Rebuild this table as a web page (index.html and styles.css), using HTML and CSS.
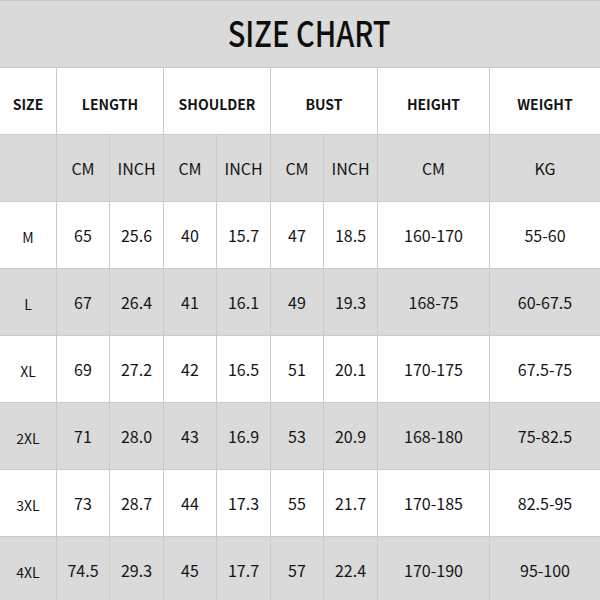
FILE: index.html
```html
<!DOCTYPE html>
<html>
<head>
<meta charset="utf-8">
<link rel="stylesheet" href="styles.css">
</head>
<body>
<div class="chart">
  <div class="title"><span class="title-text">SIZE CHART</span></div>
  <div class="grid">
    <div class="c hd">SIZE</div>
    <div class="c hd span2">LENGTH</div>
    <div class="c hd span2">SHOULDER</div>
    <div class="c hd span2">BUST</div>
    <div class="c hd">HEIGHT</div>
    <div class="c hd end">WEIGHT</div>

    <div class="c g"></div>
    <div class="c g">CM</div><div class="c g">INCH</div>
    <div class="c g">CM</div><div class="c g">INCH</div>
    <div class="c g">CM</div><div class="c g">INCH</div>
    <div class="c g">CM</div><div class="c g end">KG</div>

    <div class="c sz">M</div><div class="c">65</div><div class="c">25.6</div><div class="c">40</div><div class="c">15.7</div><div class="c">47</div><div class="c">18.5</div><div class="c">160-170</div><div class="c end">55-60</div>

    <div class="c g sz">L</div><div class="c g">67</div><div class="c g">26.4</div><div class="c g">41</div><div class="c g">16.1</div><div class="c g">49</div><div class="c g">19.3</div><div class="c g">168-75</div><div class="c g end">60-67.5</div>

    <div class="c sz">XL</div><div class="c">69</div><div class="c">27.2</div><div class="c">42</div><div class="c">16.5</div><div class="c">51</div><div class="c">20.1</div><div class="c">170-175</div><div class="c end">67.5-75</div>

    <div class="c g sz">2XL</div><div class="c g">71</div><div class="c g">28.0</div><div class="c g">43</div><div class="c g">16.9</div><div class="c g">53</div><div class="c g">20.9</div><div class="c g">168-180</div><div class="c g end">75-82.5</div>

    <div class="c sz">3XL</div><div class="c">73</div><div class="c">28.7</div><div class="c">44</div><div class="c">17.3</div><div class="c">55</div><div class="c">21.7</div><div class="c">170-185</div><div class="c end">82.5-95</div>

    <div class="c g sz">4XL</div><div class="c g">74.5</div><div class="c g">29.3</div><div class="c g">45</div><div class="c g">17.7</div><div class="c g">57</div><div class="c g">22.4</div><div class="c g">170-190</div><div class="c g end">95-100</div>
  </div>
</div>
</body>
</html>
```
FILE: styles.css
```css
html, body {
  margin: 0;
  padding: 0;
  background: #ffffff;
}
.chart {
  width: 600px;
  font-family: "Noto Sans CJK SC", "Noto Sans", sans-serif;
  color: #141414;
}
.title {
  height: 68px;
  box-sizing: border-box;
  background: #dadada;
  border-top: 1px solid #c9c9c9;
  border-bottom: 1px solid #c6c6c6;
  display: flex;
  align-items: center;
  justify-content: center;
  padding-bottom: 5px;
  padding-left: 18px;
}
.title-text {
  display: inline-block;
  font-size: 35px;
  font-weight: 500;
  color: #0d0d0d;
  transform: scaleX(0.83);
}
.grid {
  display: grid;
  grid-template-columns: 57px 53px 54px 53px 54px 53px 54px 112px 110px;
  grid-auto-rows: 67px;
}
.c {
  box-sizing: border-box;
  border-right: 1px solid #cbcbcb;
  border-bottom: 1px solid #cbcbcb;
  display: flex;
  align-items: center;
  justify-content: center;
  font-size: 16px;
  background: #ffffff;
}
.c.end {
  border-right: none;
}
.g {
  background: #dadada;
}
.hd {
  font-size: 14px;
  font-weight: 700;
  padding-top: 6px;
}
.span2 {
  grid-column: span 2;
}
.sz {
  font-size: 14px;
  padding-top: 3px;
}
```
